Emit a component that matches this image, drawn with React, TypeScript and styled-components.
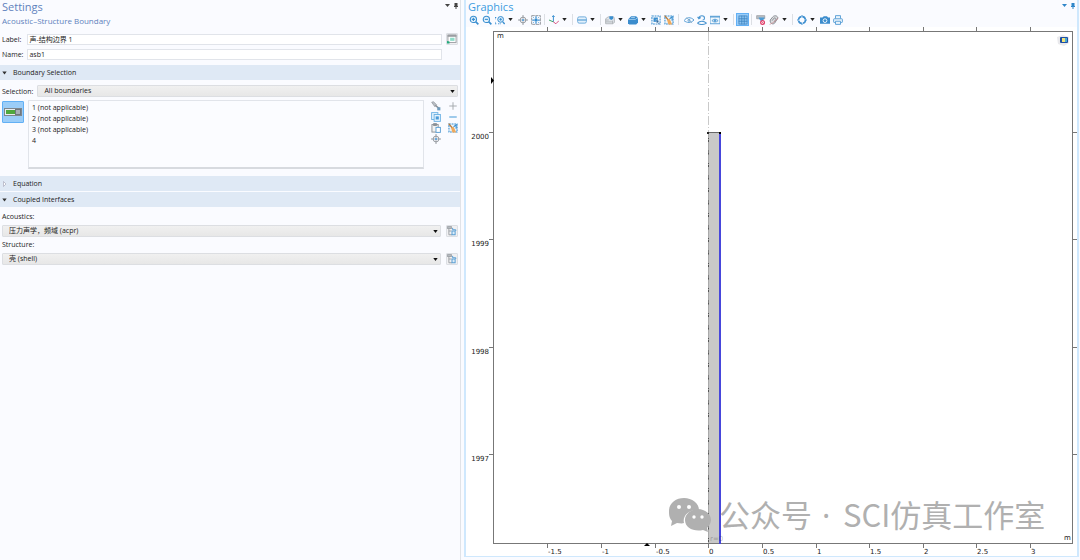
import React from "react";
import styled, { createGlobalStyle } from "styled-components";

const GlobalStyle = createGlobalStyle`
  *, *::before, *::after { box-sizing: border-box; }
  body {
    margin: 0;
    background: #fafbff;
    color: #222;
    font-family: "Open Sans", "Noto Sans CJK SC", sans-serif;
    font-size: 7px;
    line-height: 11px;
  }
  button, input, select { font: inherit; color: inherit; margin: 0; }
  h1, h2, ul { margin: 0; padding: 0; font-weight: 400; }
  svg { display: block; }
`;

const Workspace = styled.div`
  display: grid;
  grid-template-columns: 461fr 619fr;
  min-height: 100vh;
`;

const Panel = styled.section`
  display: flex;
  flex-direction: column;
  min-width: 0;
  border-right: 1px solid #e0e3e8;
`;

const GraphicsPanel = styled.section`
  display: flex;
  flex-direction: column;
  min-width: 0;
  margin: 0 1px 3px 3px;
  border: 2px solid #cfe8fd;
  border-top: 0;
  border-bottom-width: 1px;
  align-self: start;
`;

const PanelHeader = styled.header`
  display: flex;
  justify-content: space-between;
  align-items: flex-start;
  height: 13px;
  padding: 0 0 0 2px;
`;

const PanelTitle = styled.h1<{ $color: string }>`
  font-size: 11px;
  line-height: 13px;
  color: ${(p) => p.$color};
`;

const HeaderTools = styled.div`
  display: flex;
  gap: 1px;
  padding-top: 1px;
`;

const HeaderButton = styled.button<{ $color: string }>`
  width: 8px;
  height: 9px;
  padding: 0;
  border: 0;
  background: none;
  color: ${(p) => p.$color};
`;

const Subtitle = styled.h2`
  padding: 1px 2px 0;
  font-size: 8px;
  line-height: 13px;
  color: #5f82bd;
`;

const Fields = styled.div`
  display: grid;
  grid-template-columns: auto 1fr 12px;
  column-gap: 4px;
  row-gap: 4px;
  align-items: center;
  padding: 6px 2px 5px 2px;
`;

const FieldLabel = styled.label`
  min-width: 21px;
`;

const TextInput = styled.input`
  width: 100%;
  height: 11px;
  padding: 0 1px;
  border: 1px solid #e1e4ea;
  background: #fff;
`;

const SectionButton = styled.button`
  display: flex;
  align-items: center;
  gap: 6px;
  width: 100%;
  height: 15px;
  margin-bottom: 1px;
  padding: 0 2px;
  border: 0;
  background: #dfe9f5;
  text-align: left;
`;

const SectionBody = styled.div`
  padding: 4px 2px 7px 2px;
`;

const SelectionRow = styled.div`
  display: flex;
  align-items: center;
  gap: 4px;
  margin-bottom: 3px;
`;

const SelectBox = styled.div`
  position: relative;
  flex: 1;
  min-width: 0;
`;

const Select = styled.select`
  appearance: none;
  display: block;
  width: 100%;
  height: 12px;
  padding: 0 12px 0 6px;
  border: 1px solid #dcdee2;
  border-radius: 1px;
  background: linear-gradient(#f0f0f0, #e7e7e7);
  line-height: 10px;
`;

const SelectArrow = styled.svg`
  position: absolute;
  right: 3px;
  top: 5px;
  width: 5px;
  height: 3px;
  pointer-events: none;
`;

const ListRow = styled.div`
  display: flex;
  align-items: flex-start;
`;

const ActiveToggle = styled.button`
  display: grid;
  place-items: center;
  width: 22px;
  height: 22px;
  margin: 1px 4px 0 0;
  padding: 0;
  border: 1px solid #62b0f5;
  border-radius: 1px;
  background: #9bcdf8;
`;

const EntityList = styled.ul`
  flex: 1;
  height: 69px;
  padding: 1px 3px;
  border: 1px solid #e1e4ea;
  border-bottom: 2px solid #d7dadf;
  background: #fbfcff;
  list-style: none;
`;

const ListTools = styled.div`
  display: grid;
  grid-template-columns: 11px 11px;
  grid-template-rows: repeat(4, 11px);
  grid-auto-flow: column;
  column-gap: 6px;
  width: 34px;
  padding-left: 6px;
`;

const PlainButton = styled.button`
  display: grid;
  place-items: center;
  width: 11px;
  height: 11px;
  padding: 0;
  border: 0;
  background: none;
`;

const FramedButton = styled.button`
  display: grid;
  place-items: center;
  width: 12px;
  height: 12px;
  padding: 0;
  border: 1px solid #dcdfe4;
  border-radius: 1px;
  background: #f0f0f2;
`;

const CoupledField = styled.div`
  display: grid;
  grid-template-columns: 1fr 12px;
  column-gap: 5px;
  row-gap: 3px;
  margin-bottom: 3px;

  label { grid-column: 1 / -1; line-height: 10px; height: 10px; }
`;

const Toolbar = styled.div`
  display: flex;
  align-items: center;
  gap: 2px;
  height: 14px;
  padding: 0 2px 1px;
`;

const ToolButton = styled.button<{ $on?: boolean }>`
  display: grid;
  place-items: center;
  flex: none;
  width: 11px;
  height: 11px;
  padding: 0;
  border: 0;
  background: ${(p) => (p.$on ? "#9bcdf8" : "none")};
  box-shadow: ${(p) => (p.$on ? "0 0 0 1px #62b0f5" : "none")};
`;

const MenuButton = styled.button`
  display: grid;
  place-items: center;
  flex: none;
  width: 6px;
  height: 11px;
  margin-right: 2px;
  padding: 0;
  border: 0;
  background: none;
`;

const Separator = styled.span<{ $wide?: boolean }>`
  flex: none;
  width: 1px;
  height: 11px;
  margin: 0 ${(p) => (p.$wide ? 2 : 1)}px;
  background: #dcdfe4;
`;

const Plot = styled.svg`
  width: 100%;
  height: auto;
  background: #fff;
`;

const BLUE = "#3a8fd0";
const GREY = "#8b9096";

const icons: Record<string, React.ReactNode> = {
  zoomIn: (
    <g fill="none" stroke={BLUE} strokeWidth="1.8">
      <circle cx="7" cy="7" r="5" fill="#e3f1fc" />
      <path d="M4.5 7h5M7 4.5v5" />
      <path d="M11 11l4 4" strokeWidth="2.6" />
    </g>
  ),
  zoomOut: (
    <g fill="none" stroke={BLUE} strokeWidth="1.8">
      <circle cx="7" cy="7" r="5" fill="#e3f1fc" />
      <path d="M4.5 7h5" />
      <path d="M11 11l4 4" strokeWidth="2.6" />
    </g>
  ),
  zoomBox: (
    <g fill="none" stroke={BLUE} strokeWidth="1.6">
      <path d="M0 5v3M0 11v3h3M5 14h4M0 4h3" strokeDasharray="2 1" />
      <circle cx="9" cy="7" r="4.6" fill="#d7ebfb" />
      <path d="M7 7h4M9 5v4" />
      <path d="M12.5 11l3 3.5" strokeWidth="2.4" />
    </g>
  ),
  target: (
    <g fill="none" stroke={GREY} strokeWidth="1.4">
      <circle cx="8" cy="8" r="4.6" />
      <path d="M8 0v6M8 10v6M0 8h6M10 8h6" />
      <circle cx="8" cy="8" r="1" fill={BLUE} stroke={BLUE} />
    </g>
  ),
  extents: (
    <g fill="none" stroke={GREY} strokeWidth="1.4">
      <rect x="1" y="1" width="14" height="14" strokeDasharray="5 1" />
      <path d="M8 2v4M8 10v4M2 8h4M10 8h4" stroke={BLUE} strokeWidth="2" />
      <rect x="6" y="6" width="4" height="4" fill={BLUE} stroke="none" />
      <path d="M3 3l2 2M13 3l-2 2M3 13l2-2M13 13l-2-2" stroke={BLUE} strokeWidth="1" />
    </g>
  ),
  axes: (
    <g fill="none" strokeWidth="1.6">
      <path d="M7 11V1M5 3l2-2 2 2" stroke={BLUE} />
      <path d="M7 11L0 8" stroke="#41a96a" />
      <path d="M7 11l4 3 5-5" stroke="#d9527f" />
    </g>
  ),
  slab: (
    <g fill="#e3f1fc" stroke="#6aa9da" strokeWidth="1.5">
      <rect x="1" y="3" width="14" height="10" rx="2.5" />
      <path d="M1 8h14" strokeWidth="2.2" />
    </g>
  ),
  scene: (
    <g stroke="#a5a9ae" strokeWidth="1.2">
      <path d="M1 6l4-3h9l1 3v6l-3 2H1z" fill="#dfe4e9" />
      <path d="M7 2h6v4l-3 2-3-2z" fill={BLUE} stroke="none" />
      <path d="M1 8h5M1 11h10M12 9v5" fill="none" />
    </g>
  ),
  sceneBlue: (
    <g>
      <path d="M0 7l3-3 2-2h8l2 2 1 3v5l-3 3H2l-2-2z" fill="#3b8ccd" />
      <path d="M1 7h11l3-3M5 4h6" stroke="#b9dcf6" strokeWidth="1.2" fill="none" />
    </g>
  ),
  pick: (
    <g>
      <rect x="1.5" y="1.5" width="13" height="13" fill="none" stroke={BLUE} strokeWidth="1.7" strokeDasharray="3 1.3" />
      <rect x="4" y="4" width="7" height="7" fill={BLUE} />
      <path d="M8 7l6 3-3 1 3 3-1 1-3-3-1 2z" fill="#245f96" stroke="#fff" strokeWidth=".6" />
    </g>
  ),
  clearPick: (
    <g>
      <rect x="1.5" y="1.5" width="13" height="13" fill="#eef5fb" stroke={BLUE} strokeWidth="1.7" strokeDasharray="3 1.3" />
      <path d="M1 1l6 7" stroke="#b7793a" strokeWidth="2" />
      <path d="M5 8l4-2 4 9H7z" fill="#f0a95b" />
      <path d="M9 6l4-3v6" fill="none" stroke={BLUE} strokeWidth="1.8" />
    </g>
  ),
  hide: (
    <g fill="none" stroke="#5a9fd5" strokeWidth="1.6">
      <path d="M0 9c4-6 11-6 16-1-5 5-11 5-16 1z" />
      <circle cx="8" cy="8.500" r="1.600" />
      <path d="M4 4l9 9" stroke="#8aa9c2" strokeWidth="1.2" />
    </g>
  ),
  resetHide: (
    <g fill="none" stroke="#4a95d0" strokeWidth="1.7">
      <path d="M3 5c1-5 9-5 9 0 0 2-1 3-3 3M1 3l2 3 3-2" />
      <path d="M1 13c3-4 10-4 14 0-4 3-11 3-14 0z" />
    </g>
  ),
  viewBox: (
    <g fill="none" stroke="#5a9fd5" strokeWidth="1.5">
      <rect x="0" y="2" width="16" height="12" fill="#f2f8fd" />
      <path d="M0 3h16" strokeWidth="2" />
      <path d="M3 9c3-3 7-3 10 0-3 3-7 3-10 0z" />
      <circle cx="8" cy="9" r="1.4" fill={BLUE} />
    </g>
  ),
  grid: (
    <g fill="none" stroke="#3a80bd" strokeWidth="1.2">
      <rect x="1.5" y="1.5" width="13" height="13" fill="#8cc3f1" />
      <path d="M1 6h14M1 10h14M6 1v14M10 1v14" />
    </g>
  ),
  filterOff: (
    <g>
      <path d="M1 1h13v5H1z" fill="#b9bec4" stroke={GREY} />
      <path d="M4 4h10l-3 5H7z" fill="#4d9bd5" />
      <circle cx="10.500" cy="12" r="3" fill="#fff" stroke="#df3d68" strokeWidth="2" />
      <path d="M8.500 10l4 4" stroke="#df3d68" strokeWidth="1.3" />
    </g>
  ),
  clip: (
    <g fill="none" stroke={GREY} strokeWidth="1.6">
      <path d="M2 8l4-5c3-3 8-2 8 2l-5 8c-3 3-8 0-7-5z" fill="#dedfe2" />
      <path d="M5 9l3-4c2-1 3 0 3 2l-3 4" />
      <path d="M1 15l6-3 8-7" stroke="#c98c91" strokeWidth="1.2" />
    </g>
  ),
  refresh: (
    <g fill="none" stroke="#3f90d0" strokeWidth="2.6">
      <circle cx="8" cy="8" r="5.500" strokeDasharray="7 1.640" />
      <path d="M8 0v3M16 8h-3M8 16v-3M0 8h3" strokeWidth="1.5" />
    </g>
  ),
  camera: (
    <g>
      <path d="M0 4h4l2-2h5l2 2h3v10H0z" fill="#3b8ccd" />
      <circle cx="8" cy="9" r="3" fill="#3b8ccd" stroke="#fff" strokeWidth="1.4" />
    </g>
  ),
  printer: (
    <g fill="#eaf4fc" stroke="#5a9fd5" strokeWidth="1.5">
      <path d="M4 6V1h8v5" />
      <rect x="1" y="6" width="14" height="6" rx="1" />
      <path d="M4 10h8v5H4z" />
    </g>
  ),
  paint: (
    <g>
      <path d="M1 2l3-1 5 5-3 3z" fill="#b9bec4" stroke={GREY} />
      <path d="M7 7l6 5" stroke={GREY} strokeWidth="2.500" />
      <rect x="10" y="10" width="5" height="5" fill="#6f9cbd" />
    </g>
  ),
  copy: (
    <g fill="#e8f4fd" stroke="#6db2e4" strokeWidth="1.5">
      <rect x="1" y="1" width="10" height="11" />
      <rect x="5" y="4" width="10" height="11" />
      <rect x="7.500" y="7" width="5" height="5" fill="#4a9bd8" stroke="none" />
    </g>
  ),
  paste: (
    <g fill="#f2f2f2" stroke={GREY} strokeWidth="1.5">
      <rect x="1.500" y="2.500" width="10" height="12" />
      <path d="M4 1h5v3H4z" fill={GREY} />
      <rect x="8" y="7" width="7" height="8" fill="#fff" stroke="#5a9fd5" />
    </g>
  ),
  plus: <path d="M8 2v12M2 8h12" stroke="#a3a7ac" strokeWidth="1.500" />,
  minus: <path d="M2 8h12" stroke="#57a5dc" strokeWidth="1.800" />,
  createNode: (
    <g>
      <rect x="1.500" y="1.500" width="13" height="12" fill="#fff" stroke="#9a9da2" strokeWidth="1.500" />
      <path d="M1 3h14" stroke="#9a9da2" strokeWidth="3" />
      <rect x="5" y="6" width="7" height="5" fill="#8fdcc9" />
      <path d="M0 15v-4l4 1v3z" fill="#21ab7d" />
    </g>
  ),
  goTo: (
    <g fill="none" stroke="#a0a4a9" strokeWidth="1.600">
      <path d="M3 2v12h5M3 8h4" />
      <rect x="1" y="1" width="6" height="3" fill="#b9bec4" />
      <path d="M9 6h5v2M9 6V3" stroke="#5a9fd5" />
      <rect x="8" y="8" width="5" height="6" stroke="#5a9fd5" fill="#dcecf8" />
    </g>
  ),
};

const Icon = ({ name, size = 10 }: { name: string; size?: number }) => (
  <svg width={size} height={size} viewBox="0 0 16 16" aria-hidden="true">
    {icons[name]}
  </svg>
);

const Caret = () => (
  <svg width="5" height="3" viewBox="0 0 5 3" aria-hidden="true">
    <path d="M.3 0h4.400L2.500 3z" fill="currentColor" />
  </svg>
);

const PanelTools = ({ color }: { color: string }) => (
  <HeaderTools>
    <HeaderButton $color={color} aria-label="Panel menu">
      <svg width="8" height="9" viewBox="0 0 8 9">
        <path d="M2 3h5L4.500 6z" fill="currentColor" />
      </svg>
    </HeaderButton>
    <HeaderButton $color={color} aria-label="Pin panel">
      <svg width="8" height="9" viewBox="0 0 8 9">
        <path d="M2.500 2h3v4h-3zM2 5h4v1H2zM3.500 6h1v2h-1z" fill="currentColor" />
      </svg>
    </HeaderButton>
  </HeaderTools>
);

const DropDown = ({ id, value }: { id: string; value: string }) => (
  <SelectBox>
    <Select id={id} defaultValue={value}>
      <option>{value}</option>
    </Select>
    <SelectArrow viewBox="0 0 5 3" aria-hidden="true">
      <path d="M.3 0h4.400L2.500 3z" fill="#111" />
    </SelectArrow>
  </SelectBox>
);

const SectionHead = ({ title, open }: { title: string; open: boolean }) => (
  <SectionButton aria-expanded={open}>
    <svg width="5" height="6" viewBox="0 0 5 6" aria-hidden="true">
      {open ? <path d="M.3 1.500h4.400L2.500 4.500z" fill="#333" /> : <path d="M1.500 .5v5L4 3z" fill="#fff" stroke="#aab" strokeWidth=".7" />}
    </svg>
    {title}
  </SectionButton>
);

const listTools: [string, string][] = [
  ["paint", "Create selection"],
  ["copy", "Copy selection"],
  ["paste", "Paste selection"],
  ["target", "Zoom to selection"],
  ["plus", "Add to selection"],
  ["minus", "Remove from selection"],
  ["clearPick", "Clear selection"],
];

const toolbar = [
  "zoomIn", "zoomOut", "zoomBox", "menu", "target", "extents", "|",
  "axes", "menu", "|",
  "slab", "menu", "|",
  "scene", "menu", "sceneBlue", "menu", "pick", "clearPick", "||",
  "hide", "resetHide", "viewBox", "menu", "|",
  "grid", "|",
  "filterOff", "clip", "menu", "|",
  "refresh", "menu", "camera", "printer",
];

const Settings = () => (
  <Panel>
    <PanelHeader>
      <PanelTitle $color="#5f82bd">Settings</PanelTitle>
      <PanelTools color="#444" />
    </PanelHeader>
    <Subtitle>Acoustic–Structure Boundary</Subtitle>
    <Fields>
      <FieldLabel htmlFor="label">Label:</FieldLabel>
      <TextInput id="label" defaultValue="声-结构边界 1" />
      <FramedButton aria-label="Show node">
        <Icon name="createNode" />
      </FramedButton>
      <FieldLabel htmlFor="name">Name:</FieldLabel>
      <TextInput id="name" defaultValue="asb1" />
    </Fields>
    <SectionHead title="Boundary Selection" open />
    <SectionBody>
      <SelectionRow>
        <label htmlFor="selection">Selection:</label>
        <DropDown id="selection" value="All boundaries" />
      </SelectionRow>
      <ListRow>
        <ActiveToggle aria-label="Active">
          <svg width="18" height="10" viewBox="0 0 18 10">
            <rect x=".5" y="1.500" width="17" height="7" fill="#e9edf0" stroke="#7f868c" />
            <rect x="2" y="3" width="9" height="4" fill="#4fa83d" />
            <rect x="11.500" y="2.500" width="5" height="5" fill="#a9afb5" stroke="#70777e" />
          </svg>
        </ActiveToggle>
        <EntityList>
          <li>1 (not applicable)</li>
          <li>2 (not applicable)</li>
          <li>3 (not applicable)</li>
          <li>4</li>
        </EntityList>
        <ListTools>
          {listTools.map(([name, label]) => (
            <PlainButton key={name} aria-label={label}>
              <Icon name={name} />
            </PlainButton>
          ))}
        </ListTools>
      </ListRow>
    </SectionBody>
    <SectionHead title="Equation" open={false} />
    <SectionHead title="Coupled Interfaces" open />
    <SectionBody>
      <CoupledField>
        <label htmlFor="acoustics">Acoustics:</label>
        <DropDown id="acoustics" value="压力声学，频域 (acpr)" />
        <FramedButton aria-label="Go to acoustics source">
          <Icon name="goTo" />
        </FramedButton>
      </CoupledField>
      <CoupledField>
        <label htmlFor="structure">Structure:</label>
        <DropDown id="structure" value="壳 (shell)" />
        <FramedButton aria-label="Go to structure source">
          <Icon name="goTo" />
        </FramedButton>
      </CoupledField>
    </SectionBody>
  </Panel>
);

const xTicks = [
  { at: 81, text: "-1.5" },
  { at: 135, text: "-1" },
  { at: 189, text: "-0.5" },
  { at: 242, text: "0" },
  { at: 296, text: "0.5" },
  { at: 350, text: "1" },
  { at: 403, text: "1.5" },
  { at: 457, text: "2" },
  { at: 510, text: "2.5" },
  { at: 564, text: "3" },
];

const yTicks = [
  { at: 106, text: "2000" },
  { at: 213, text: "1999" },
  { at: 321, text: "1998" },
  { at: 428, text: "1997" },
];

const PlotText = styled.text`
  font-family: "DejaVu Sans", sans-serif;
  font-size: 7px;
  fill: #222;
`;

const Watermark = styled.text`
  font-family: "Noto Sans CJK SC", sans-serif;
  font-size: 31px;
  fill: #b0b0b0;

  .dot { font-family: "Noto Sans", sans-serif; }
`;

const Geometry = () => (
  <Plot viewBox="0 0 611 529" role="img" aria-label="Geometry plot">
    <rect x="27.500" y="4.500" width="579" height="512" fill="#fff" stroke="#777" />
    <g stroke="#777">
      {xTicks.map((t) => (
        <path key={t.text} d={`M${t.at + 0.5} 0v4M${t.at + 0.5} 516v5`} />
      ))}
      {yTicks.map((t) => (
        <path key={t.text} d={`M23 ${t.at - 0.5}h5M606 ${t.at - 0.5}h5`} />
      ))}
    </g>
    {xTicks.map((t) => (
      <PlotText key={t.text} x={t.at + 1} y="527">{t.text}</PlotText>
    ))}
    {yTicks.map((t) => (
      <PlotText key={t.text} x="23" y={t.at + 6} textAnchor="end">{t.text}</PlotText>
    ))}
    <PlotText x="31" y="11">m</PlotText>
    <PlotText x="598" y="513">m</PlotText>

    <path d="M242.500 5v100" stroke="#c9c9c9" strokeDasharray="9 2 1 2" />
    <rect x="242" y="106" width="12" height="410" fill="#c8c8c8" />
    <path d="M242.500 106v410" stroke="#a9a9a9" />
    <path d="M242.500 111v405" stroke="#555" strokeDasharray="1 1 2 8.500" />
    <path d="M242 105.500h12" stroke="#666" />
    <path d="M254 106v411" stroke="#4646dc" strokeWidth="2" />
    <rect x="241" y="105" width="2" height="2" fill="#222" />
    <rect x="253" y="105" width="2" height="2" fill="#000" />
    <path d="M25 50l3 3.500-3 3.500z" fill="#000" />
    <path d="M178 519l3-3 3 3z" fill="#000" />
    <PlotText x="244" y="514" fillOpacity="0.3">r=0</PlotText>

    <path d="M591 10l6-2 6 2v6l-5 3-6-2z" fill="#e9e9ec" />
    <rect x="594" y="10" width="8" height="6" rx="1" fill="#1e4fa3" />
    <rect x="596" y="11" width="4" height="4" fill="#f2e37a" />
    <rect x="599" y="11" width="2" height="4" fill="#49a9d5" />

    <g fill="#b0b0b0">
      <path d="M218 471c8 0 15 5 15 12-9-1-17 5-15 13-2 1-5 0-7 0l-6 3 1-5c-3-3-3-7-3-10 0-8 7-13 15-13z" />
      <path d="M232 482c7 0 13 5 13 11 0 3-2 6-4 8l1 4-5-2c-9 2-18-2-18-10 0-6 6-11 13-11z" />
    </g>
    <g fill="#fff">
      <circle cx="213" cy="480" r="2" />
      <circle cx="223" cy="480" r="2" />
      <circle cx="228" cy="490" r="1.700" />
      <circle cx="236" cy="490" r="1.700" />
    </g>
    <Watermark x="253" y="500">
      公众号 <tspan className="dot" x="356">·</tspan> <tspan x="377">SCI仿真工作室</tspan>
    </Watermark>
  </Plot>
);

const Graphics = () => (
  <GraphicsPanel>
    <PanelHeader>
      <PanelTitle $color="#3a9be0">Graphics</PanelTitle>
      <PanelTools color="#2f86c9" />
    </PanelHeader>
    <Toolbar role="toolbar" aria-label="Graphics toolbar">
      {toolbar.map((name, i) => {
        if (name === "|" || name === "||") return <Separator key={i} $wide={name === "||"} />;
        if (name === "menu") {
          return (
            <MenuButton key={i} aria-label="More options">
              <Caret />
            </MenuButton>
          );
        }
        return (
          <ToolButton key={i} $on={name === "grid"} aria-label={name}>
            <Icon name={name} />
          </ToolButton>
        );
      })}
    </Toolbar>
    <Geometry />
  </GraphicsPanel>
);

export default function App() {
  return (
    <Workspace>
      <GlobalStyle />
      <Settings />
      <Graphics />
    </Workspace>
  );
}
